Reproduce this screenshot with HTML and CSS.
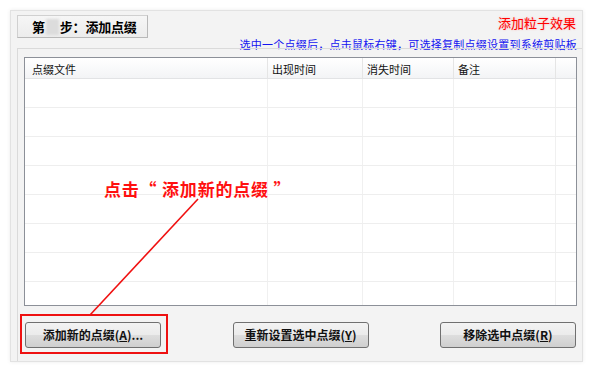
FILE: index.html
```html
<!DOCTYPE html>
<html lang="zh-CN">
<head>
<meta charset="utf-8">
<title>添加点缀</title>
<link rel="stylesheet" href="styles.css">
</head>
<body>
<div class="page">
  <div class="panel">
    <div class="top">
      <div class="tab">第<span class="step-mask"></span>步：添加点缀</div>
      <div class="notes">
        <div class="note-red">添加粒子效果</div>
        <div class="note-blue">选中一个点缀后，点击鼠标右键，可选择复制点缀设置到系统剪贴板</div>
      </div>
    </div>
    <div class="group">
      <div class="list">
        <div class="row head">
          <div class="c c1">点缀文件</div>
          <div class="c c2">出现时间</div>
          <div class="c c3">消失时间</div>
          <div class="c c4">备注</div>
          <div class="c c5"></div>
        </div>
        <div class="row"><div class="c c1"></div><div class="c c2"></div><div class="c c3"></div><div class="c c4"></div><div class="c c5"></div></div>
        <div class="row"><div class="c c1"></div><div class="c c2"></div><div class="c c3"></div><div class="c c4"></div><div class="c c5"></div></div>
        <div class="row"><div class="c c1"></div><div class="c c2"></div><div class="c c3"></div><div class="c c4"></div><div class="c c5"></div></div>
        <div class="row"><div class="c c1"></div><div class="c c2"></div><div class="c c3"></div><div class="c c4"></div><div class="c c5"></div></div>
        <div class="row"><div class="c c1"></div><div class="c c2"></div><div class="c c3"></div><div class="c c4"></div><div class="c c5"></div></div>
        <div class="row"><div class="c c1"></div><div class="c c2"></div><div class="c c3"></div><div class="c c4"></div><div class="c c5"></div></div>
        <div class="row"><div class="c c1"></div><div class="c c2"></div><div class="c c3"></div><div class="c c4"></div><div class="c c5"></div></div>
        <div class="row"><div class="c c1"></div><div class="c c2"></div><div class="c c3"></div><div class="c c4"></div><div class="c c5"></div></div>
      </div>
      <div class="buttons">
        <button class="btn">添加新的点缀(<u>A</u>)...</button>
        <button class="btn">重新设置选中点缀(<u>Y</u>)</button>
        <button class="btn">移除选中点缀(<u>R</u>)</button>
      </div>
    </div>
  </div>

  <div class="callout-text">点击“ 添加新的点缀 ”</div>
  <svg class="callout-line" width="600" height="377" viewBox="0 0 600 377">
    <line x1="90" y1="315" x2="198" y2="199" stroke="#f01010" stroke-width="1.6"/>
  </svg>
  <div class="callout-box"></div>
</div>
</body>
</html>
```

FILE: styles.css
```css
* { box-sizing: border-box; }

html, body {
  margin: 0;
  padding: 0;
  background: #ffffff;
}

body {
  font-family: "Noto Sans CJK SC", "Noto Sans", sans-serif;
  color: #000;
}

.page {
  position: relative;
  width: 600px;
  height: 377px;
  padding: 10px 0 0 10px;
}

.panel {
  width: 573px;
  height: 352px;
  border: 1px solid #e2e2e2;
  background: #f3f3f3;
  box-shadow: 0 0 4px rgba(0, 0, 0, 0.08);
  display: flex;
  flex-direction: column;
}

.top {
  height: 37px;
  display: flex;
  padding: 4px 5px 0 6px;
}

.tab {
  width: 131px;
  height: 23px;
  border: 1px solid #d0d0d0;
  border-right-color: #b8b8b8;
  border-bottom-color: #b8b8b8;
  background: linear-gradient(#f6f6f6, #ececec);
  font-size: 13px;
  font-weight: 700;
  line-height: 20px;
  padding-left: 14px;
  display: flex;
  align-items: center;
  letter-spacing: -0.2px;
}

.step-mask {
  display: inline-block;
  width: 13px;
  height: 16px;
  margin: 0 1px;
  background: #dcdcdc;
  filter: blur(1px);
}

.notes {
  margin-left: auto;
  display: flex;
  flex-direction: column;
  align-items: flex-end;
}

.note-red {
  color: #ff0000;
  font-size: 13px;
  line-height: 16px;
  margin-top: 0;
  margin-right: 1px;
  text-shadow: 0 0 2px rgba(255, 120, 120, 0.6);
}

.note-blue {
  color: #1414f0;
  font-size: 11px;
  letter-spacing: 0.25px;
  line-height: 14px;
  margin-top: 6px;
  margin-right: 0;
}

.group {
  flex: 1;
  margin-left: 6px;
  border-left: 1px solid #dadada;
  border-top: 1px solid #dadada;
  padding: 8px 5px 0 6px;
  display: flex;
  flex-direction: column;
}

.list {
  width: 553px;
  height: 249px;
  border: 1px solid #8c9098;
  background: #ffffff;
  overflow: hidden;
}

.row {
  display: flex;
  height: 29px;
  border-bottom: 1px solid #eeeeee;
}

.row.head {
  height: 21px;
  background: linear-gradient(#ffffff, #f3f4f6);
  border-bottom: 1px solid #e2e3e5;
}

.c {
  border-right: 1px solid #f0f0f0;
  font-size: 11px;
  line-height: 22px;
  color: #111;
  padding-left: 7px;
  white-space: nowrap;
}

.head .c {
  border-right-color: #e5e5e5;
}

.c1 { width: 243px; }
.c2 { width: 95px; padding-left: 4px; }
.c3 { width: 91px; padding-left: 4px; }
.c4 { width: 102px; padding-left: 4px; }
.c5 { flex: 1; border-right: none; }

.buttons {
  display: flex;
  justify-content: space-between;
  padding: 0 1px;
  margin-top: 16px;
}

.btn {
  width: 136px;
  height: 26px;
  border: 1px solid #707070;
  border-radius: 3px;
  background: linear-gradient(#f3f3f3 0%, #ebebeb 48%, #dddddd 52%, #cfcfcf 100%);
  font-family: "Noto Sans CJK SC", "Noto Sans", sans-serif;
  font-size: 12px;
  font-weight: 700;
  color: #111;
  padding: 0;
  line-height: 24px;
}

.btn u {
  text-decoration: underline;
}

.callout-box {
  position: absolute;
  left: 20px;
  top: 314px;
  width: 148px;
  height: 40px;
  border: 2px solid #ee1111;
}

.callout-line {
  position: absolute;
  left: 0;
  top: 0;
  pointer-events: none;
}

.callout-text {
  position: absolute;
  left: 104px;
  top: 177px;
  color: #ff1010;
  font-size: 17px;
  font-weight: 700;
  line-height: 24px;
  letter-spacing: 0.8px;
  white-space: pre;
}
```
